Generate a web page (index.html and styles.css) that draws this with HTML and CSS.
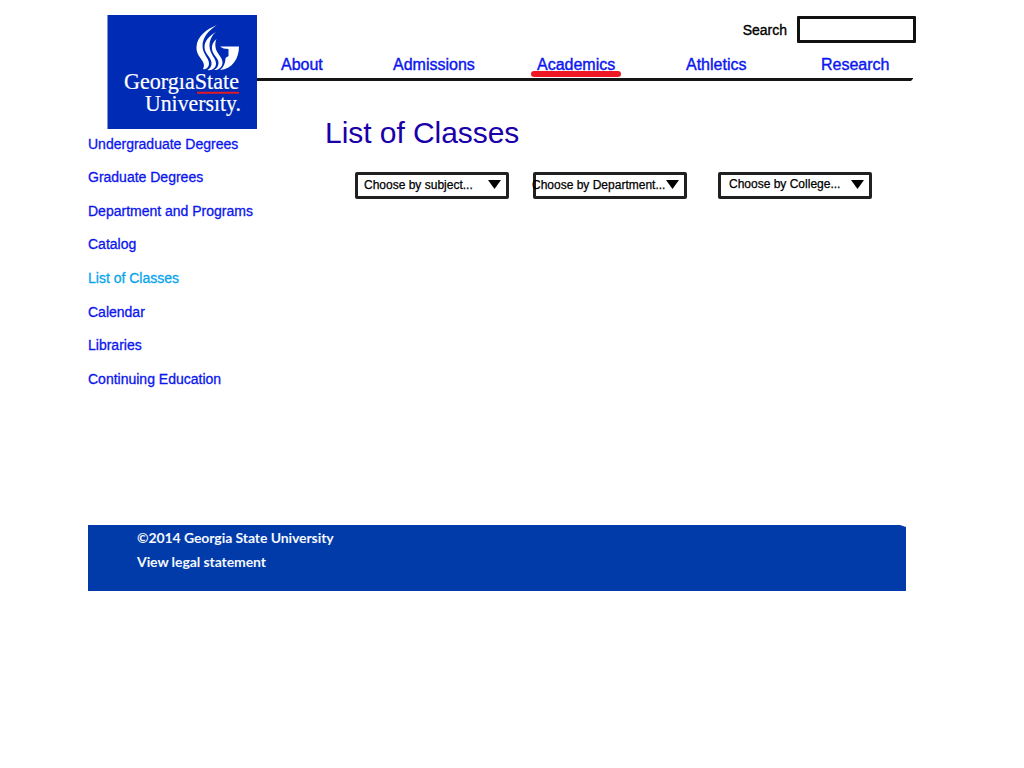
FILE: index.html
```html
<!DOCTYPE html>
<html lang="en">
<head>
<meta charset="utf-8">
<title>List of Classes</title>
<link rel="stylesheet" href="styles.css">
</head>
<body>
<header class="header">
  <svg class="logo" viewBox="0 0 150 114" role="img" aria-label="Georgia State University">
    <rect x="0.500" width="149.500" height="114" fill="#002bb5"/>
    <g fill="#fff">
      <path d="M110 10C100 14 90 21 89.500 32C89 39 94 43 96 47C97.500 50 97 52 96 54C99 55 102 52 102 48.500C102 43 95.500 39 95.500 31C95.500 22 102 15 110 10Z"/>
      <path d="M109 17C102 21 97.500 26 97.500 32C97.500 39 104 42 104.500 47.500C105 51 103 53.500 100.500 55C105 56 109 53 109 48.500C109 43 102.500 39 102.500 31C102.500 25 105 20 109 17Z"/>
      <path d="M109.500 24C106 27 104.500 30 105 34C105.500 40 111 42 111.500 47.500C111.500 51 110 53.500 107 55C111.500 55.500 115.500 52 115.500 47.500C115.500 42 109 38 108.500 32C108 29 108.500 26 109.500 24Z"/>
      <path d="M113 31.500H132C132 44 125 54 113 55C117 52 118.500 47 118.500 43L121.500 41V34Q116 34 113 31.500Z"/>
    </g>
    <text class="logo-word" x="17" y="73.500" textLength="115" lengthAdjust="spacingAndGlyphs">Georg&#305;aState</text>
    <path d="M90 77.700H132" stroke="#e01b25" stroke-width="2"/>
    <text class="logo-word" x="38" y="95.500" textLength="96" lengthAdjust="spacingAndGlyphs">Univers&#305;ty.</text>
  </svg>
  <div class="header-main">
    <form class="search">
      <label class="search-label" for="q">Search</label>
      <input class="search-input" id="q" type="text">
    </form>
    <nav class="nav">
      <a class="nav-link">About</a>
      <a class="nav-link">Admissions</a>
      <a class="nav-link nav-current">Academics</a>
      <a class="nav-link">Athletics</a>
      <a class="nav-link">Research</a>
    </nav>
  </div>
</header>
<div class="body">
  <nav class="sidebar">
    <a class="side-link">Undergraduate Degrees</a>
    <a class="side-link">Graduate Degrees</a>
    <a class="side-link">Department and Programs</a>
    <a class="side-link">Catalog</a>
    <a class="side-link side-current">List of Classes</a>
    <a class="side-link">Calendar</a>
    <a class="side-link">Libraries</a>
    <a class="side-link">Continuing Education</a>
  </nav>
  <main class="main">
    <h1 class="title">List of Classes</h1>
    <div class="filters">
      <div class="filter"><span class="filter-text">Choose by subject...</span><svg class="arrow" viewBox="0 0 13 9"><path d="M0 0H13L6.500 9Z"/></svg></div>
      <div class="filter filter-department"><span class="filter-text">Choose by Department...</span><svg class="arrow" viewBox="0 0 13 9"><path d="M0 0H13L6.500 9Z"/></svg></div>
      <div class="filter filter-college"><span class="filter-text">Choose by College...</span><svg class="arrow" viewBox="0 0 13 9"><path d="M0 0H13L6.500 9Z"/></svg></div>
    </div>
  </main>
</div>
<footer class="footer">
  <p class="footer-line">©2014 Georgia State University</p>
  <p class="footer-line">View legal statement</p>
</footer>
</body>
</html>
```
FILE: styles.css
```css
* { box-sizing: border-box; }
body {
  margin: 0;
  padding-top: 15px;
  background: #fff;
  font-family: "Liberation Sans", Arial, sans-serif;
}
.header {
  display: flex;
  width: 916px;
  height: 114px;
  padding-left: 107px;
}
.logo { width: 150px; height: 114px; flex: none; }
.logo-word {
  fill: #fff;
  font-family: "Liberation Serif", "Times New Roman", serif;
  font-size: 24px;
  stroke: #fff;
  stroke-width: 0.2px;
}
.header-main { flex: 1; }
.search {
  display: flex;
  justify-content: flex-end;
  align-items: center;
  gap: 10px;
  height: 29px;
}
.search-label {
  font-size: 14px;
  color: #000;
  -webkit-text-stroke: 0.35px #000;
}
.search-input {
  width: 119px;
  height: 27px;
  padding: 0 4px;
  border: 3px solid #111;
  border-radius: 1px;
  background: #fff;
}
.nav {
  display: grid;
  grid-template-columns: 112px 144px 149px 135px auto;
  width: 656px;
  height: 37px;
  padding: 12px 0 0 24px;
  border-bottom: 3px solid #151515;
  clip-path: polygon(0 0, 100% 0, 100% 94%, 654px 100%, 0 100%);
}
.nav-link {
  justify-self: start;
  font-size: 16px;
  line-height: 18px;
  color: #0b16ee;
  -webkit-text-stroke: 0.4px #0b16ee;
}
.nav-current { position: relative; }
.nav-current::after {
  content: "";
  position: absolute;
  left: -6px;
  right: -6px;
  top: 15px;
  height: 6px;
  border-radius: 3px;
  background: #f01824;
}
.body { display: flex; height: 396px; padding-left: 88px; }
.sidebar {
  display: flex;
  flex-direction: column;
  gap: 17.600px;
  width: 237px;
  padding-top: 6.700px;
}
.side-link {
  font-size: 14px;
  line-height: 16px;
  color: #0b16ee;
  -webkit-text-stroke: 0.3px currentColor;
}
.side-current { color: #08a5ee; }
.title {
  height: 34px;
  margin: -13px 0 0;
  font-size: 30px;
  font-weight: 400;
  line-height: 34px;
  letter-spacing: -0.050px;
  color: #1a00a8;
}
.filters { display: flex; padding: 22px 0 0 30px; }
.filter {
  display: flex;
  justify-content: space-between;
  width: 154px;
  height: 27px;
  padding: 3px 5px 0 6px;
  border: 3px solid #202020;
  border-radius: 2px;
}
.filter-department { margin-left: 24px; padding: 3px 5px 0 0; }
.filter-college { margin-left: 31px; padding-left: 8px; }
.filter-text {
  font-size: 12px;
  line-height: 14px;
  white-space: nowrap;
  color: #000;
  -webkit-text-stroke: 0.25px #000;
}
.filter-department .filter-text { margin-left: -4px; }
.filter-college .filter-text { margin-top: -1px; }
.arrow { width: 13px; height: 9px; flex: none; margin-top: 2px; }
.footer {
  width: 818px;
  height: 66px;
  margin-left: 88px;
  padding: 1px 0 0 49px;
  background: #003ba9;
  clip-path: polygon(0 0, 812px 0, 818px 2px, 818px 100%, 0 100%);
}
.footer-line {
  margin: 0;
  font: 700 14px/24px Lato, sans-serif;
  letter-spacing: -0.080px;
  color: #f4f7fc;
}
```
